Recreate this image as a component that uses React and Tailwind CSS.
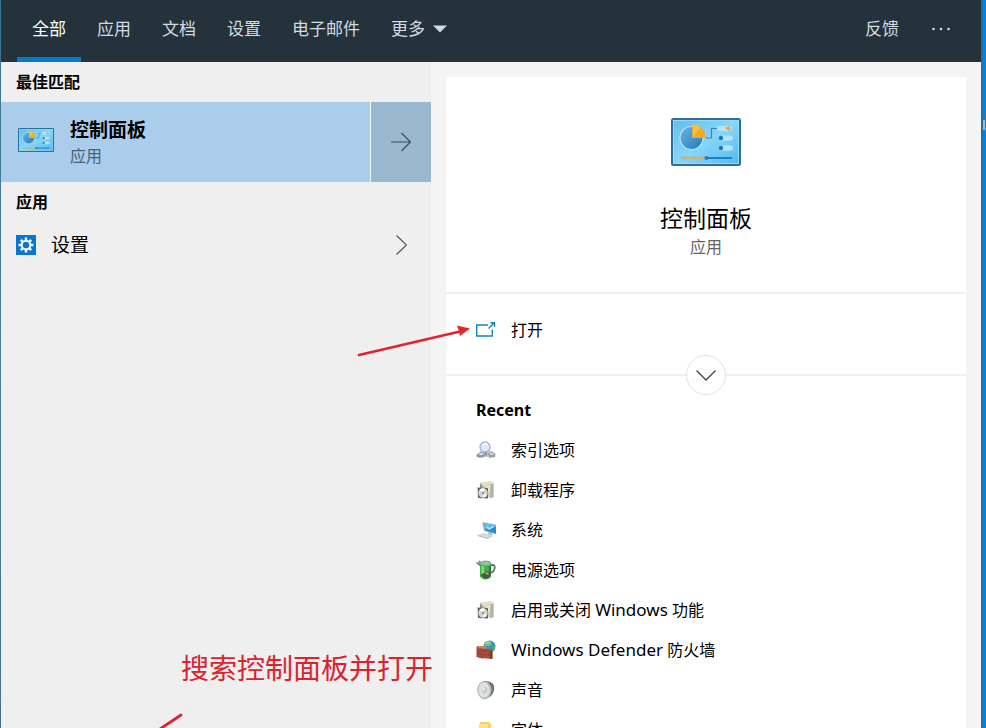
import React from "react";

const tabs = ["全部", "应用", "文档", "设置", "电子邮件"];

function ControlPanelIcon({ className, id }) {
  return (
    <svg viewBox="0 0 70 48" preserveAspectRatio="none" className={className} aria-hidden="true">
      <defs>
        <linearGradient id={id + "-bg"} x1="0" y1="0" x2="1" y2="1">
          <stop offset="0" stopColor="#63bce9" />
          <stop offset="0.5" stopColor="#86d6f9" />
          <stop offset="1" stopColor="#55b7ee" />
        </linearGradient>
        <linearGradient id={id + "-pie"} x1="0" y1="0" x2="1" y2="1">
          <stop offset="0" stopColor="#64b8e8" />
          <stop offset="1" stopColor="#2676b6" />
        </linearGradient>
      </defs>
      <rect x="1" y="1" width="68" height="46" rx="1.5" fill={"url(#" + id + "-bg)"} stroke="#2f6f97" strokeWidth="2" />
      <rect x="2.5" y="2.5" width="65" height="43" fill="none" stroke="#9be0fb" strokeWidth="0.8" />
      <circle cx="20.500" cy="20" r="11.500" fill={"url(#" + id + "-pie)"} stroke="#b9e5fa" strokeWidth="1.2" />
      <path d="M21.500 20V6.500a13 13 0 0 1 13 13.500z" fill="#f7a823" />
      <path d="M21.500 20V6.500a13 13 0 0 1 8 3z" fill="#fbbf3c" />
      <path d="M35 20h5.500V10.500H46" fill="none" stroke="#3487bd" strokeWidth="1.2" />
      <rect x="46" y="8" width="15" height="5" rx="2.500" fill="#b8e3f8" />
      <path d="m54 10 4-2 2 3-2 2z" fill="#e8a05c" />
      <rect x="48" y="17.500" width="14" height="5" rx="2.500" fill="#b5e5fb" />
      <circle cx="50" cy="20" r="2.200" fill="#1d78b8" />
      <rect x="48" y="27.500" width="14" height="5" rx="2.500" fill="#b5e5fb" />
      <circle cx="50" cy="30" r="2.200" fill="#1d78b8" />
      <path d="M10 40h24" stroke="#d8ae62" strokeWidth="2.400" />
      <path d="M35 40h26" stroke="#2180c2" strokeWidth="2" />
      <circle cx="35.500" cy="40" r="2" fill="#2a7cb5" />
    </svg>
  );
}

const icon = "size-5 shrink-0";

function IndexIcon() {
  return (
    <svg viewBox="0 0 20 20" className={icon} aria-hidden="true">
      <path d="m4 11 6-2 8 3 1.500 2.500-5 3-7-1-5-2z" fill="#c3c8cb" />
      <path d="m.5 14.500 4.500-2.500 4 2-.5 3-4.500.8-3.500-1z" fill="#8f959a" />
      <path d="m11.500 13.500 5-1.500 3 2-.5 3-5.500 1z" fill="#9da3a4" />
      <path d="m2 14 3-1 3 1.300-3 1zM13 14l4-1 1.500 1-4 1z" fill="#e3e6e7" />
      <circle cx="9" cy="7" r="5" fill="#dbeafa" stroke="#a9b7cf" strokeWidth="1.400" />
      <path d="M6.500 5a3.500 3.500 0 0 1 5 0" stroke="#fff" strokeWidth="1.300" fill="none" />
      <path d="m9.500 12 1 3.500" stroke="#747e89" strokeWidth="1.300" />
    </svg>
  );
}

function ProgramsIcon() {
  return (
    <svg viewBox="0 0 20 20" className={icon} aria-hidden="true">
      <path d="m4 3 11-2 2.500 2v14l-3 1L4 14z" fill="#cfcfc6" />
      <path d="m4 3 11-2 2.500 2-11 2.500z" fill="#e4dfc5" />
      <path d="M4 3.200 6.500 5.500V8H4z" fill="#8f928f" />
      <path d="M9 5.500 14 5v7l-3 1z" fill="#f4e6ab" />
      <path d="M14.500 4.500l3-1V17l-3 1z" fill="#adb0ad" />
      <path d="M1.500 7.500 12 8v10.500L2 18z" fill="#64686b" />
      <circle cx="7" cy="13" r="4.700" fill="#d4d8dc" />
      <path d="M7 13 3.500 10a5 5 0 0 1 5-1.500z" fill="#fff" />
      <path d="m7 13 4 2.500a5 5 0 0 1-4 2z" fill="#f3f4f5" />
      <circle cx="7" cy="13" r="1.400" fill="#959b9f" />
    </svg>
  );
}

function SystemIcon() {
  return (
    <svg viewBox="0 0 20 20" className={icon} aria-hidden="true">
      <path d="m6 2 14 2.500v10L8 11z" fill="#a9cde4" />
      <path d="m7 3 13 2.300v8.400L9 10.500z" fill="#2491d5" />
      <path d="m7 3 13 2.300v1.200L12 9.500 8 8z" fill="#62bcea" />
      <path d="m11 7 2.500 2 4-2.500" fill="none" stroke="#c9eeff" strokeWidth="1.200" />
      <path d="m12 12.200 4 1v2l-4-1z" fill="#a5b0b8" />
      <path d="m1.500 15 6-2 9 2-5 3z" fill="#d5dadd" />
      <path d="m1.500 15 10 3 5-3v1l-5 3-10-3z" fill="#adb6bc" />
    </svg>
  );
}

function PowerIcon() {
  return (
    <svg viewBox="0 0 20 20" className={icon} aria-hidden="true">
      <path d="m.5 2.500 4 3 1.500 4M3 .8l2 4" stroke="#7c8a80" strokeWidth="1.800" fill="none" />
      <path d="M14 6c6.500-4 6 5 .5 7" stroke="#5d7564" strokeWidth="1.800" fill="none" />
      <path d="M4 3v13.500c2 3.500 9 4 11 .5V3.500z" fill="#3fb04a" />
      <path d="M5.500 6v10l2.500 1.500V6z" fill="#7fde74" />
      <path d="M13 6v11l2-1V6z" fill="#2b7a3c" />
      <ellipse cx="9.500" cy="3.500" rx="5.500" ry="2.400" fill="#8fc39a" stroke="#688b6f" strokeWidth="0.8" />
      <path d="m4.500 15 6-3.500 4 .5-2 6-4 1z" fill="#4b5a40" />
      <path d="m9.500 13 3 1" stroke="#b8b76c" strokeWidth="1.500" />
    </svg>
  );
}

function FirewallIcon() {
  return (
    <svg viewBox="0 0 20 20" className={icon} aria-hidden="true">
      <circle cx="13.500" cy="6.500" r="6" fill="#3794bd" />
      <path d="M9.500 2.500c3-3 7-1 6 2l-3 2-2-1-2 2z" fill="#70c879" />
      <path d="m15.500 7 3-2 .5 3-2.500 3z" fill="#51ae59" />
      <path d="M9.500 4c2-2 4-2 5-1" stroke="#aee8e2" strokeWidth="1" fill="none" />
      <path d="m.5 6.500 9-.5 2 3 5 .5V19L4 18l-3.500-1z" fill="#a34d3b" />
      <path d="m.5 6.500 9-.5 2 3-8-.5z" fill="#ca8269" />
      <path d="M1 10.500 16 12M1 13.500l15 1.500M5 8v3m5-2v3m-6 0v3m5-2v3m4-3v3m-7 0v3" stroke="#8a4033" strokeWidth="0.700" />
      <path d="M14 11h2.500v8H14z" fill="#703129" opacity=".6" />
    </svg>
  );
}

function SoundIcon() {
  return (
    <svg viewBox="0 0 20 20" className={icon} aria-hidden="true">
      <path d="M8 1c4 0 9 1 10 5 .6 5-1 9-5 11l-4 2z" fill="#6e7273" />
      <ellipse cx="8.500" cy="10" rx="6.800" ry="8.800" fill="#c1c5c6" stroke="#9ea3a4" strokeWidth="0.700" />
      <ellipse cx="8" cy="10" rx="5.400" ry="7.400" fill="#dfe2e3" />
      <ellipse cx="8.500" cy="10" rx="2.600" ry="3.500" fill="#c3c8cb" />
      <ellipse cx="7.800" cy="9" rx="1.500" ry="2" fill="#e8eaec" />
    </svg>
  );
}

function FontsIcon() {
  return (
    <svg viewBox="0 0 20 20" className={icon} aria-hidden="true">
      <path d="M4 2h9l2 2v14H4z" fill="#f5d36c" />
      <path d="M3 4h9v15l-9-1z" fill="#fbe28d" />
    </svg>
  );
}

function GearIcon() {
  return (
    <svg viewBox="0 0 20 20" className="size-5 shrink-0 bg-[#0877d1]" aria-hidden="true">
      <circle cx="10" cy="10" r="4.300" fill="none" stroke="#fff" strokeWidth="1.900" />
      <g stroke="#fff" strokeWidth="2.400">
        <path d="M10 2.600v2.600M10 14.800v2.600M2.600 10h2.600M14.800 10h2.600" />
        <path d="m4.800 4.800 1.800 1.800m6.800 6.800 1.800 1.800m0-10.400-1.800 1.800m-6.800 6.800-1.800 1.800" />
      </g>
    </svg>
  );
}

const recent = [
  ["索引选项", IndexIcon],
  ["卸载程序", ProgramsIcon],
  ["系统", SystemIcon],
  ["电源选项", PowerIcon],
  [
    <>
      启用或关闭 <span className="text-[17px]">Windows</span> 功能
    </>,
    ProgramsIcon,
  ],
  [
    <>
      <span className="text-[17px]">Windows Defender</span> 防火墙
    </>,
    FirewallIcon,
  ],
  ["声音", SoundIcon],
  ["字体", FontsIcon],
];

function Header() {
  return (
    <header className="flex h-[62px] shrink-0 items-stretch justify-between bg-[#24323b] pr-3.5 pl-4 text-[17px] text-[#d3dce1]">
      <nav className="flex gap-px" aria-label="搜索类别">
        {tabs.map((tab, i) => (
          <button
            key={tab}
            className={
              i === 0
                ? "border-b-5 border-[#0877d1] px-[15px] pt-[5px] pb-1 text-white"
                : "border-b-5 border-transparent px-[15px] pt-[5px] pb-1"
            }
          >
            {tab}
          </button>
        ))}
        <button className="flex items-center gap-2 border-b-5 border-transparent px-[15px] pt-[5px] pb-1">
          更多
          <svg viewBox="0 0 14 8" className="h-2 w-3.5" aria-hidden="true">
            <path d="M0 .5h14L7 7.500z" fill="#d3dce1" />
          </svg>
        </button>
      </nav>
      <div className="flex">
        <button className="border-b-5 border-transparent px-4 pt-[5px] pb-1">反馈</button>
        <button className="flex items-center border-b-5 border-transparent px-4" aria-label="选项">
          <svg viewBox="0 0 20 4" className="h-1 w-5" fill="#d3dce1" aria-hidden="true">
            <circle cx="2.500" cy="2" r="1.300" />
            <circle cx="10" cy="2" r="1.300" />
            <circle cx="17.500" cy="2" r="1.300" />
          </svg>
        </button>
      </div>
    </header>
  );
}

function Results() {
  return (
    <section className="bg-[#efefef]">
      <h2 className="flex h-10 items-center px-[15px] text-base font-bold">最佳匹配</h2>
      <div className="flex h-20 gap-px bg-[#f3f8fb]">
        <button className="flex flex-1 items-center gap-4 bg-[#a9cdeb] pl-[17px] text-left">
          <ControlPanelIcon id="small" className="mb-1 h-6 w-9" />
          <span className="flex flex-col">
            <span className="text-[19px] leading-7 font-bold">控制面板</span>
            <span className="text-base leading-6 text-[#496172]">应用</span>
          </span>
        </button>
        <button className="flex w-15 items-center justify-center bg-[#99b8d0]" aria-label="展开控制面板">
          <svg viewBox="0 0 20 20" className="size-5" fill="none" stroke="#344b5b" strokeWidth="1.200" aria-hidden="true">
            <path d="M0 10h19.500M10.500 1l9 9-9 9" />
          </svg>
        </button>
      </div>
      <h2 className="flex h-10 items-center px-[15px] text-base font-bold">应用</h2>
      <button className="flex h-[46px] w-full items-center gap-[15px] pr-6 pl-[15px] text-[19px]">
        <GearIcon />
        <span className="flex-1 text-left">设置</span>
        <svg viewBox="0 0 11 20" className="h-5 w-[11px]" fill="none" stroke="#555" strokeWidth="1.200" aria-hidden="true">
          <path d="m.5 .5 10 9.500-10 9.500" />
        </svg>
      </button>
    </section>
  );
}

function Details() {
  return (
    <section className="bg-[#f4f4f4] p-[15px] pb-0">
      <div className="min-h-full bg-white text-base">
        <div className="flex flex-col items-center border-b-2 border-[#f0f0f0] pt-[41px] pb-[33px]">
          <ControlPanelIcon id="large" className="h-12 w-[70px]" />
          <h1 className="mt-9 text-[23px] leading-8">控制面板</h1>
          <p className="mt-px leading-6 text-[#666]">应用</p>
        </div>
        <div className="relative border-b-2 border-[#f0f0f0] px-[30px] pt-4 pb-6">
          <button className="flex h-10 w-full items-center gap-[15px] text-left">
            <svg viewBox="0 0 20 20" className={icon} fill="none" stroke="#1683bb" strokeWidth="1.400" aria-hidden="true">
              <path d="M12 5H.7v11h15.600V9.500M12.500 8.500l5-5M14.500 2.700h4V7" />
            </svg>
            打开
          </button>
          <button
            className="absolute -bottom-[21px] left-1/2 flex size-10 -translate-x-1/2 items-center justify-center rounded-full border border-[#e2e2e2] bg-white"
            aria-label="展开"
          >
            <svg viewBox="0 0 20 11" className="h-[11px] w-5" fill="none" stroke="#444" strokeWidth="1.300" aria-hidden="true">
              <path d="m.5 .5 9.500 9.500 9.500-9.500" />
            </svg>
          </button>
        </div>
        <div className="px-[30px] pt-[14px]">
          <h2 className="flex h-10 items-center font-bold">Recent</h2>
          <ul>
            {recent.map(([name, Icon], i) => (
              <li key={i}>
                <button className="flex h-10 w-full items-center gap-[15px] text-left">
                  <Icon />
                  <span>{name}</span>
                </button>
              </li>
            ))}
          </ul>
        </div>
      </div>
    </section>
  );
}

export default function App() {
  return (
    <div className="relative flex h-screen overflow-hidden font-['Noto_Sans','Noto_Sans_CJK_SC',sans-serif] text-black" lang="zh-CN">
      <div className="w-px bg-linear-to-b from-[#397494] via-[#47819b] to-[#486d83]" />
      <main className="flex min-w-0 flex-1 flex-col">
        <Header />
        <div className="grid flex-1 grid-cols-[43fr_55fr]">
          <Results />
          <Details />
        </div>
      </main>
      <div className="w-[5px] border-l-2 border-[#1672b0] bg-[#0782d7] pt-[120px]">
        <div className="h-2.5 w-[2px] bg-[#a9b8bd]" />
      </div>

      <p className="absolute top-[648px] left-[181px] text-[28px] leading-10 text-[#d9232e]">搜索控制面板并打开</p>
      <svg viewBox="0 0 480 728" className="pointer-events-none absolute top-0 left-0 h-[728px] w-[480px]" aria-hidden="true">
        <path d="M359 355 460 331.500" stroke="#e0252f" strokeWidth="2.800" strokeLinecap="round" />
        <path d="m470 328.500-13-3 2 5.500 1 5z" fill="#e0252f" />
        <path d="m181 715-24 16" stroke="#d9232e" strokeWidth="2.800" strokeLinecap="round" />
      </svg>
    </div>
  );
}
